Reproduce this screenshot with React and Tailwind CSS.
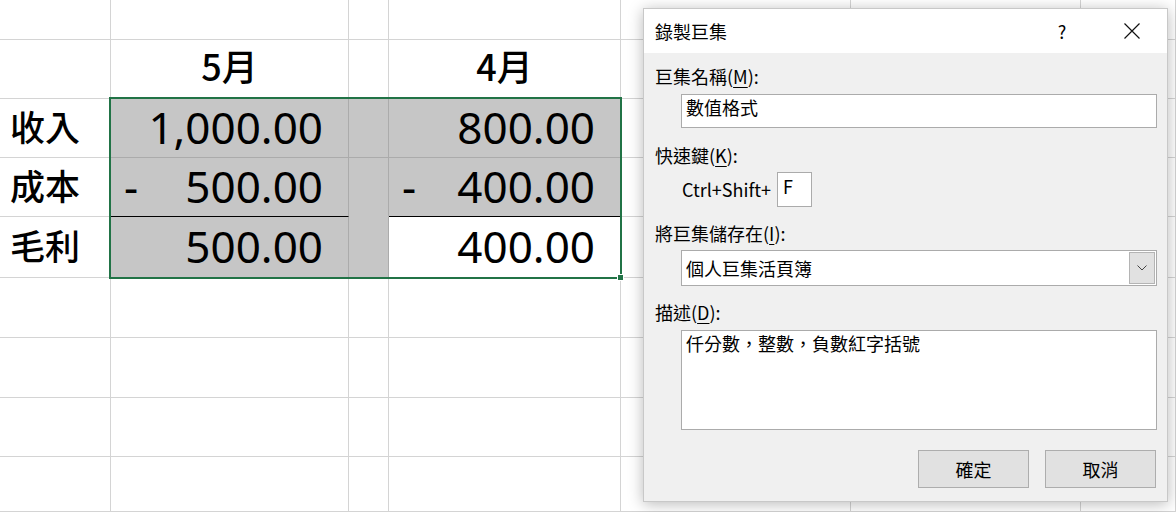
const colW = ['w-[111px]', 'w-[238px]', 'w-[40px]', 'w-[232px]', 'w-[230px]', 'w-[230px]', 'flex-1'];
const rowH = ['h-[40px]', 'h-[59px]', 'h-[59px]', 'h-[59px]', 'h-[61px]', 'h-[60px]', 'h-[60px]', 'h-[59px]', 'h-[55px]'];

// cell: { t: text, kind: 'label' | 'head' | 'num', sel, dash, black }
const sheet = [
    [],
    [{}, { t: '5月', kind: 'head' }, {}, { t: '4月', kind: 'head' }],
    [{ t: '收入', kind: 'label' }, { t: '1,000.00', kind: 'num', sel: true }, { sel: true }, { t: '800.00', kind: 'num', sel: true }],
    [{ t: '成本', kind: 'label' }, { t: '500.00', kind: 'num', sel: true, dash: true, black: true }, { sel: true, hide: true }, { t: '400.00', kind: 'num', sel: true, dash: true, black: true }],
    [{ t: '毛利', kind: 'label' }, { t: '500.00', kind: 'num', sel: true }, { sel: true }, { t: '400.00', kind: 'num' }],
    [], [], [], [],
];

const Cell = ({ w, cell = {} }) => {
    let border = 'border-[#d4d4d4]';
    if (cell.sel) border = 'border-[#ababab]';
    const bottom = cell.black ? 'border-b-black' : cell.hide ? 'border-b-[#c6c6c6]' : '';
    const bg = cell.sel ? 'bg-[#c6c6c6]' : 'bg-white';

    let content = null;
    if (cell.kind === 'label') {
        content = (
            <div className="h-full flex items-center pl-[10px] pb-[4px] text-[35px] font-medium font-['Noto_Sans_CJK_TC',sans-serif] text-black">
                {cell.t}
            </div>
        );
    } else if (cell.kind === 'head') {
        content = (
            <div className="h-full flex items-center justify-center pb-[8px] text-[36px] font-medium font-['Noto_Sans_CJK_TC',sans-serif] text-black">
                {cell.t}
            </div>
        );
    } else if (cell.kind === 'num') {
        content = (
            <div className="h-full flex items-center justify-between pl-[13px] pr-[25px] pb-[3px] text-[44px] font-['Noto_Sans',sans-serif] text-black leading-none">
                <span>{cell.dash ? '-' : ''}</span>
                <span>{cell.t}</span>
            </div>
        );
    }

    return (
        <div className={`${w} shrink-0 h-full box-border border-r border-b ${border} ${bottom} ${bg}`}>
            {content}
        </div>
    );
};

const Mn = ({ children }) => <span className="underline underline-offset-[3px] decoration-1">{children}</span>;

const MacroDialog = () => (
    <div className="absolute left-[643px] top-[8px] w-[525px] h-[494px] bg-[#f0f0f0] border border-[#c8c8c8] shadow-[0_2px_14px_rgba(0,0,0,0.28)] flex flex-col font-['Noto_Sans_CJK_TC',sans-serif] text-[18px] text-black leading-[24px]">
        <div className="h-[44px] bg-white flex items-center pl-[11px] pr-[12px]">
            <div className="flex-1 -mt-[1px]">錄製巨集</div>
            <div className="w-[46px] text-center">?</div>
            <div className="w-[24px]" />
            <div className="w-[46px] flex justify-center">
                <svg width="16" height="16" viewBox="0 0 16 16">
                    <path d="M0.5 0.5L15.5 15.5M15.5 0.5L0.5 15.5" stroke="#111" strokeWidth="1.2" fill="none" />
                </svg>
            </div>
        </div>

        <div className="flex flex-col pl-[11px] pr-[10px] pt-[11px]">
            <div>巨集名稱(<Mn>M</Mn>):</div>
            <div className="ml-[26px] mt-[6px] h-[34px] bg-white border border-[#ababab] pl-[4px]">數值格式</div>

            <div className="mt-[15px]">快速鍵(<Mn>K</Mn>):</div>
            <div className="ml-[27px] mt-[5px] flex items-center">
                <span className="-mt-[2px]">Ctrl+Shift+</span>
                <div className="ml-[6px] w-[35px] h-[35px] bg-white border border-[#ababab] pl-[5px] pt-[1px]">F</div>
            </div>

            <div className="mt-[14px]">將巨集儲存在(<Mn>I</Mn>):</div>
            <div className="ml-[26px] mt-[5px] h-[36px] bg-white border border-[#ababab] flex items-center pl-[4px] pr-[1px]">
                <div className="flex-1">個人巨集活頁簿</div>
                <div className="w-[26px] h-[32px] bg-[#e1e1e1] border border-[#b4b4b4] flex items-center justify-center">
                    <svg width="10" height="6" viewBox="0 0 10 6">
                        <path d="M0.5 0.5L5 5L9.5 0.5" stroke="#444" strokeWidth="1" fill="none" />
                    </svg>
                </div>
            </div>

            <div className="mt-[14px]">描述(<Mn>D</Mn>):</div>
            <div className="ml-[26px] mt-[6px] h-[100px] bg-white border border-[#ababab] pl-[4px]">仟分數，整數，負數紅字括號</div>

            <div className="mt-[20px] flex justify-end gap-[16px] pr-[1px]">
                <button className="w-[111px] h-[38px] bg-[#e1e1e1] border border-[#adadad]">確定</button>
                <button className="w-[111px] h-[38px] bg-[#e1e1e1] border border-[#adadad]">取消</button>
            </div>
        </div>
    </div>
);

const App = () => {
    return (
        <div className="relative w-[1176px] h-[512px] overflow-hidden bg-white">
            <div className="flex flex-col">
                {rowH.map((h, r) => (
                    <div key={r} className={`flex ${h}`}>
                        {colW.map((w, c) => (
                            <Cell key={c} w={w} cell={sheet[r][c]} />
                        ))}
                    </div>
                ))}
            </div>

            {/* selection box + fill handle */}
            <div className="absolute left-[109px] top-[97px] w-[513px] h-[182px] border-2 border-[#217346]" />
            <div className="absolute left-[617px] top-[274px] w-[7px] h-[7px] bg-[#217346] border border-white" />

            <MacroDialog />
        </div>
    );
};

export default App;
